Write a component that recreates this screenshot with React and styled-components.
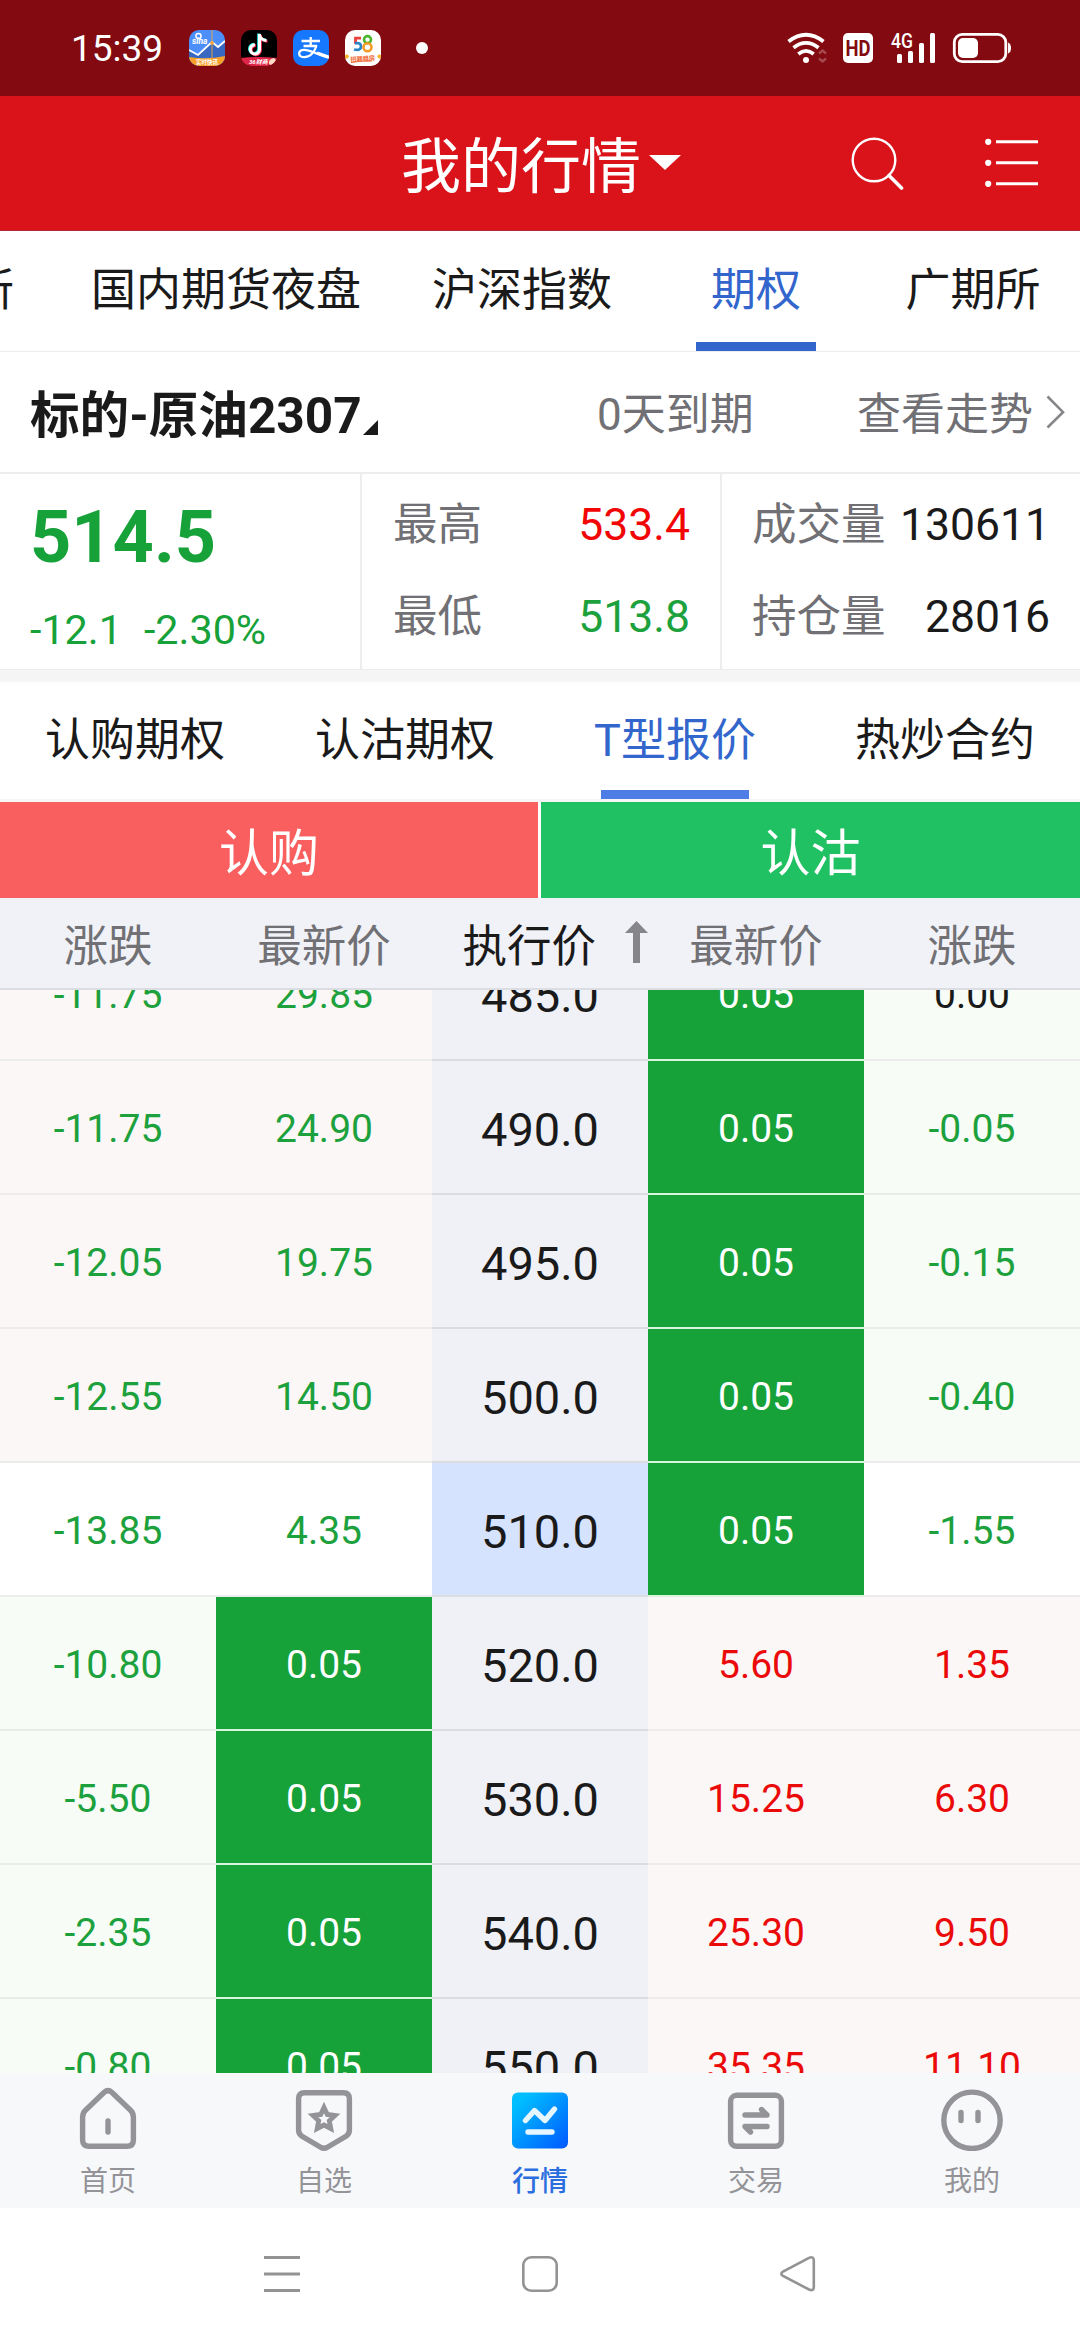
import styled, { createGlobalStyle, css } from 'styled-components';

const tabs = [
  { label: '上期所', width: 60 },
  { label: '国内期货夜盘', width: 332 },
  { label: '沪深指数', width: 260 },
  { label: '期权', width: 208, active: true },
  { label: '广期所', width: 226 },
];

const optionTabs = [
  { label: '认购期权' },
  { label: '认沽期权' },
  { label: 'T型报价', active: true },
  { label: '热炒合约' },
];

const quotes = [
  ['-11.75', '29.85', '485.0', '0.05', '0.00'],
  ['-11.75', '24.90', '490.0', '0.05', '-0.05'],
  ['-12.05', '19.75', '495.0', '0.05', '-0.15'],
  ['-12.55', '14.50', '500.0', '0.05', '-0.40'],
  ['-13.85', '4.35', '510.0', '0.05', '-1.55'],
  ['-10.80', '0.05', '520.0', '5.60', '1.35'],
  ['-5.50', '0.05', '530.0', '15.25', '6.30'],
  ['-2.35', '0.05', '540.0', '25.30', '9.50'],
  ['-0.80', '0.05', '550.0', '35.35', '11.10'],
];

const AT_THE_MONEY = 4;

const navItems = [
  { label: '首页', Icon: HomeIcon },
  { label: '自选', Icon: StarIcon },
  { label: '行情', Icon: MarketIcon, active: true },
  { label: '交易', Icon: TradeIcon },
  { label: '我的', Icon: MineIcon },
];

const App = () => {
  return (
    <>
      <GlobalStyle />
      <Screen>
        <StatusBar>
          <Clock>15:39</Clock>
          <AppIcons>
            <SinaIcon />
            <TiktokIcon />
            <AlipayIcon />
            <WubaIcon />
          </AppIcons>
          <MoreDot />
          <StatusIcons />
        </StatusBar>

        <Header>
          <HeaderTitle>
            <span>我的行情</span>
            <svg width='32' height='15' viewBox='0 0 32 15'>
              <path d='M0 0h32L16 15z' fill='#fff' />
            </svg>
          </HeaderTitle>
          <HeaderActions>
            <svg width='54' height='54' viewBox='0 0 54 54' fill='none' stroke='#fff'>
              <circle cx='23' cy='24' r='21.3' strokeWidth='2.4' />
              <path d='M38 39.5L50.5 52' strokeWidth='3.6' strokeLinecap='round' />
            </svg>
            <svg width='54' height='50' viewBox='0 0 54 50' fill='#fff'>
              <circle cx='3.2' cy='3.8' r='3.1' />
              <circle cx='3.2' cy='24.8' r='3.1' />
              <circle cx='3.2' cy='45.8' r='3.1' />
              <path d='M11 2.3h42v3H11zM11 23.3h42v3H11zM11 44.3h42v3H11z' />
            </svg>
          </HeaderActions>
        </Header>

        <TabBar>
          {tabs.map((tab) => (
            <Tab key={tab.label} $width={tab.width} $active={tab.active}>
              {tab.label}
            </Tab>
          ))}
        </TabBar>

        <ContractBar>
          <ContractName>
            标的-原油2307
            <svg width='15' height='15' viewBox='0 0 15 15'>
              <path d='M15 0v15H0z' fill='#1a1a1a' />
            </svg>
          </ContractName>
          <Expiry>0天到期</Expiry>
          <TrendLink>
            查看走势
            <svg width='19' height='34' viewBox='0 0 19 34' fill='none'>
              <path d='M1.5 1.5L17 17.2L1.5 32.5' stroke='#85858a' strokeWidth='2.6' />
            </svg>
          </TrendLink>
        </ContractBar>

        <Summary>
          <PriceBlock>
            <LastPrice>514.5</LastPrice>
            <Change>
              <span>-12.1</span>
              <span>-2.30%</span>
            </Change>
          </PriceBlock>
          <StatBlock>
            <Stat>
              <StatLabel>最高</StatLabel>
              <StatValue $color='#f10505'>533.4</StatValue>
            </Stat>
            <Stat>
              <StatLabel>最低</StatLabel>
              <StatValue $color='#1ca13d'>513.8</StatValue>
            </Stat>
          </StatBlock>
          <StatBlock>
            <Stat>
              <StatLabel>成交量</StatLabel>
              <StatValue>130611</StatValue>
            </Stat>
            <Stat>
              <StatLabel>持仓量</StatLabel>
              <StatValue>28016</StatValue>
            </Stat>
          </StatBlock>
        </Summary>
        <Divider />

        <OptionTabs>
          {optionTabs.map((tab) => (
            <OptionTab key={tab.label} $active={tab.active}>
              {tab.label}
            </OptionTab>
          ))}
        </OptionTabs>

        <Sides>
          <Side $color='#f95f5f'>认购</Side>
          <Side $color='#1fc162'>认沽</Side>
        </Sides>

        <TableHead>
          <HeadCell>涨跌</HeadCell>
          <HeadCell>最新价</HeadCell>
          <StrikeHead>
            执行价
            <svg width='23' height='42' viewBox='0 0 23 42'>
              <path d='M11.5 0L23 12H15v30H8V12H0z' fill='#85858a' />
            </svg>
          </StrikeHead>
          <HeadCell>最新价</HeadCell>
          <HeadCell>涨跌</HeadCell>
        </TableHead>

        <TableBody>
          <Rows>
            {quotes.map((quote, i) => (
              <QuoteRow key={quote[2]} quote={quote} offset={i - AT_THE_MONEY} />
            ))}
          </Rows>
        </TableBody>

        <BottomNav>
          {navItems.map(({ label, Icon, active }) => (
            <NavItem key={label} $active={active}>
              <Icon />
              {label}
            </NavItem>
          ))}
        </BottomNav>

        <SystemNav>
          <svg width='36' height='36' viewBox='0 0 36 36'>
            <path d='M0 0h36v3H0zM0 16.5h36v3H0zM0 33h36v3H0z' fill='#939393' />
          </svg>
          <svg width='36' height='36' viewBox='0 0 36 36' fill='none'>
            <rect x='1.3' y='1.3' width='33.4' height='33.4' rx='8' stroke='#939393' strokeWidth='2.6' />
          </svg>
          <svg width='36' height='36' viewBox='0 0 36 36' fill='none'>
            <path
              d='M29 1.9L3 15.6Q-0.4 17.6 3 19.8L29 33.5Q33.8 35.5 33.8 31V4.5Q33.8 0 29 1.9Z'
              stroke='#939393'
              strokeWidth='2.6'
            />
          </svg>
        </SystemNav>
      </Screen>
    </>
  );
};

export default App;

const textColor = (value) => {
  if (value.startsWith('-')) return '#1ca13d';
  return Number(value) === 0 ? '#1a1a1a' : '#eb0a0a';
};

const QuoteRow = ({ quote, offset }) => {
  const [callChange, callPrice, strike, putPrice, putChange] = quote;
  const leftBg = offset === 0 ? '#fff' : offset < 0 ? '#fbf7f6' : '#f7fcf6';
  const rightBg = offset === 0 ? '#fff' : offset < 0 ? '#f7fcf6' : '#fbf7f6';

  return (
    <Row>
      <Cell $bg={leftBg} $color={textColor(callChange)}>
        {callChange}
      </Cell>
      {offset > 0 ? (
        <FlashCell>{callPrice}</FlashCell>
      ) : (
        <Cell $bg={leftBg} $color='#1ca13d'>
          {callPrice}
        </Cell>
      )}
      <StrikeCell $current={offset === 0}>{strike}</StrikeCell>
      {offset > 0 ? (
        <Cell $bg={rightBg} $color={textColor(putPrice)}>
          {putPrice}
        </Cell>
      ) : (
        <FlashCell>{putPrice}</FlashCell>
      )}
      <Cell $bg={rightBg} $color={textColor(putChange)}>
        {putChange}
      </Cell>
    </Row>
  );
};

function SinaIcon() {
  return (
    <svg width='36' height='36' viewBox='0 0 36 36'>
      <clipPath id='sina'>
        <rect width='36' height='36' rx='10' />
      </clipPath>
      <g clipPath='url(#sina)'>
        <rect width='36' height='36' fill='#4c8ffb' />
        <path d='M0 21l9 4L23 12l6 5 7-6v17H0z' fill='#3767c0' />
        <path d='M0 20l9 5L23 12l6 5 7-6' fill='none' stroke='#fff' strokeWidth='1.8' />
        <path d='M23 0v28' stroke='#dba550' strokeWidth='1' />
        <circle cx='23' cy='13' r='1.8' fill='#f7a233' />
        <path d='M0 27q18 3 36-1v10H0z' fill='#f8a22c' />
        <circle cx='9.5' cy='6' r='2.6' fill='none' stroke='#fff' strokeWidth='1.5' />
        <text x='3' y='14' fontSize='8.5' fontWeight='700' fontStyle='italic' fill='#fff'>
          sina
        </text>
        <text x='7' y='34' fontSize='5.5' fontWeight='700' fill='#fff'>
          实时快讯
        </text>
      </g>
    </svg>
  );
}

function TiktokIcon() {
  const note = 'M18.5 4v15.2a4.6 4.6 0 1 1-4.6-4.4M18.5 5q1 5 7 5.6';
  return (
    <svg width='36' height='36' viewBox='0 0 36 36'>
      <clipPath id='tiktok'>
        <rect width='36' height='36' rx='10' />
      </clipPath>
      <g clipPath='url(#tiktok)' fill='none' strokeWidth='3'>
        <rect width='36' height='36' fill='#000' />
        <path d={note} stroke='#25f4ee' transform='translate(-.8 -.6)' />
        <path d={note} stroke='#fe2c55' transform='translate(.9 .7)' />
        <path d={note} stroke='#fff' />
        <path d='M0 28q18-2 36 0v8H0z' fill='#e02447' />
        <path d='M28 34q-1-5 5-6l2 2q-2 4-5 5z' fill='#ffd9c4' />
        <text x='8' y='34.3' fontSize='6' fontWeight='700' fontStyle='italic' fill='#fff'>
          36财商
        </text>
      </g>
    </svg>
  );
}

function AlipayIcon() {
  return (
    <svg width='36' height='36' viewBox='0 0 36 36' fill='none' stroke='#fff'>
      <clipPath id='alipay'>
        <rect width='36' height='36' rx='10' />
      </clipPath>
      <g clipPath='url(#alipay)'>
        <rect width='36' height='36' fill='#1677ff' stroke='none' />
        <path d='M8.5 11h18.5M17.7 7v9M10.5 16h13.5' strokeWidth='2.3' />
        <path
          d='M23.6 15.5C21.5 22 17 27.2 11.5 27.2C4.5 27.2 4.5 19.8 11 19.8C18 19.8 24 25 37 28'
          strokeWidth='2.3'
        />
        <path d='M24 23l13 4.5' strokeWidth='3' />
      </g>
    </svg>
  );
}

function WubaIcon() {
  return (
    <svg width='36' height='36' viewBox='0 0 36 36' fill='none'>
      <rect width='36' height='36' rx='10' fill='#fff' />
      <path d='M16 8.2H10.5V14' stroke='#e8413c' strokeWidth='2.8' />
      <path d='M10 13.5q6-1.5 6 3t-7 3' stroke='#2a86c8' strokeWidth='2.8' />
      <circle cx='22.5' cy='9.6' r='3.5' stroke='#4cb52f' strokeWidth='2.6' />
      <circle cx='22.5' cy='17.2' r='4' stroke='#f39a27' strokeWidth='2.6' />
      <circle cx='1.8' cy='26.5' r='2' fill='#f5b02c' />
      <circle cx='34.4' cy='26.5' r='1.9' fill='#f5b02c' />
      <text x='5.5' y='31' fontSize='6.2' fontWeight='700' fill='#f0632b' transform='rotate(-4 18 30)'>
        招聘租房
      </text>
      <path d='M6 32.5q10-2 21-1.5' stroke='#f0632b' strokeWidth='1' />
    </svg>
  );
}

function StatusIcons() {
  return (
    <StatusSvg width='226' height='32' viewBox='787 32 226 32'>
      <g fill='none' stroke='#fff' strokeWidth='3.7'>
        <path d='M788.5 41.5Q806 28 823.5 41.5' />
        <path d='M793.5 47.8Q806 38 818.5 47.8' />
        <path d='M798.3 54Q806 47.8 813.7 54' />
      </g>
      <circle cx='806' cy='60' r='3' fill='#fff' />
      <path d='M819 53.5l3.5-3 3.5 3M819 58.5l3.5 3 3.5-3' fill='none' stroke='#a54a4f' strokeWidth='2.4' />
      <rect x='843' y='33' width='30' height='30' rx='5' fill='#fff' />
      <text x='845.5' y='56' fontSize='22' fontWeight='700' fill='#820a10' textLength='25' lengthAdjust='spacingAndGlyphs'>
        HD
      </text>
      <text x='891' y='48' fontSize='20' fontWeight='500' fill='#fff' textLength='22' lengthAdjust='spacingAndGlyphs'>
        4G
      </text>
      <g fill='#fff'>
        <rect x='897' y='54' width='5' height='9' rx='1.5' />
        <rect x='908' y='51' width='5' height='12' rx='1.5' />
        <rect x='919' y='43' width='5' height='20' rx='1.5' />
        <rect x='930' y='33' width='5' height='30' rx='1.5' />
      </g>
      <rect x='954.3' y='34.3' width='51.5' height='27.4' rx='8' fill='none' stroke='#fff' strokeWidth='2.8' />
      <rect x='958' y='38' width='20' height='20' rx='5' fill='#fff' />
      <path d='M1008 42.5q3 1 3 5.5t-3 5.5z' fill='#fff' />
    </StatusSvg>
  );
}

function HomeIcon() {
  return (
    <svg width='64' height='64' viewBox='0 0 64 64' fill='none' stroke='#939398' strokeWidth='5.4' strokeLinecap='round'>
      <path d='M28.2 5.2Q32 2 35.8 5.2L54.5 23.3Q57.4 26 57.4 30V53Q57.4 59.3 51 59.3H13Q6.6 59.3 6.6 53V30Q6.6 26 9.5 23.3Z' />
      <path d='M32 34v11' />
    </svg>
  );
}

function StarIcon() {
  return (
    <svg width='64' height='64' viewBox='0 0 64 64' fill='none' stroke='#939398' strokeWidth='5.4'>
      <path d='M12.6 5.7H51.4Q57.4 5.7 57.4 11.7V43Q57.4 47 54 49.2L35 60.5Q32 62 29 60.5L10 49.2Q6.6 47 6.6 43V11.7Q6.6 5.7 12.6 5.7Z' />
      <path
        d='M32 20.5L35.3 27.5L43 28.5L37.3 33.8L38.8 41.5L32 38L25.2 41.5L26.7 33.8L21 28.5L28.7 27.5Z'
        strokeWidth='4.8'
      />
    </svg>
  );
}

function MarketIcon() {
  return (
    <svg width='64' height='64' viewBox='0 0 64 64' fill='none'>
      <linearGradient id='market' x1='0.15' y1='0.15' x2='1' y2='1'>
        <stop offset='0' stopColor='#00beff' />
        <stop offset='1' stopColor='#0058ff' />
      </linearGradient>
      <rect x='4' y='5.5' width='56' height='56' rx='6' fill='url(#market)' />
      <path
        d='M17.5 33.5L26.5 23.5L37 33.5L46.5 22M20 45h24'
        stroke='#e6f6ff'
        strokeWidth='5.4'
        strokeLinecap='round'
        strokeLinejoin='round'
      />
    </svg>
  );
}

function TradeIcon() {
  return (
    <svg
      width='64'
      height='64'
      viewBox='0 0 64 64'
      fill='none'
      stroke='#939398'
      strokeWidth='5.4'
      strokeLinecap='round'
      strokeLinejoin='round'
    >
      <rect x='6.6' y='8.3' width='50.8' height='51' rx='6' />
      <path d='M21 28H43L37.5 22.5M43 39.5H21L26.5 45' />
    </svg>
  );
}

function MineIcon() {
  return (
    <svg width='64' height='64' viewBox='0 0 64 64' fill='none' stroke='#939398' strokeWidth='5.4' strokeLinecap='round'>
      <circle cx='32' cy='33.3' r='28.2' />
      <path d='M21 25.500v8M38 25.500v8' />
    </svg>
  );
}

const GlobalStyle = createGlobalStyle`
  * {
    box-sizing: border-box;
  }

  body {
    margin: 0;
    background: #fff;
    font-family: Roboto, 'Noto Sans CJK SC', sans-serif;
    color: #1a1a1a;
  }

  svg {
    display: block;
    flex-shrink: 0;
  }
`;

const Screen = styled.div`
  width: 1080px;
  height: 2340px;
  display: flex;
  flex-direction: column;
  overflow: hidden;
  white-space: nowrap;
`;

const StatusBar = styled.div`
  height: 96px;
  padding: 0 67px 0 71px;
  display: flex;
  align-items: center;
  background-color: #820a10;
`;

const Clock = styled.div`
  width: 118px;
  color: #fff;
  font-size: 37px;
`;

const AppIcons = styled.div`
  display: flex;
  gap: 16px;
`;

const MoreDot = styled.div`
  width: 12px;
  height: 12px;
  margin-left: 35px;
  border-radius: 50%;
  background-color: #fff;
`;

const StatusSvg = styled.svg`
  margin-left: auto;
`;

const Header = styled.header`
  height: 135px;
  padding: 0 41px 0 401px;
  display: flex;
  align-items: center;
  justify-content: space-between;
  background-color: #da121a;
  border-bottom: 1px solid #b02a33;
`;

const HeaderTitle = styled.h1`
  margin: 0;
  display: flex;
  align-items: center;
  gap: 8px;
  color: #fff;
  font-size: 60px;
  font-weight: 400;
  line-height: 80px;

  span {
    padding-top: 10px;
  }

  svg {
    margin-bottom: 1px;
  }
`;

const HeaderActions = styled.div`
  display: flex;
  align-items: center;
  gap: 80px;
`;

const TabBar = styled.nav`
  height: 121px;
  display: flex;
  border-bottom: 1px solid #ededed;
`;

const Tab = styled.div`
  width: ${({ $width }) => $width}px;
  flex-shrink: 0;
  display: flex;
  flex-direction: column;
  align-items: center;
  padding-top: 28px;
  font-size: 45px;
  line-height: 64px;

  &:first-child {
    align-items: flex-end;
    padding-right: 46px;
  }

  ${({ $active }) =>
    $active &&
    css`
      color: #3366cc;

      &::after {
        content: '';
        width: 120px;
        height: 9px;
        margin-top: 19px;
        background-color: #3366cc;
      }
    `}
`;

const ContractBar = styled.div`
  height: 122px;
  padding: 0 15px 3px 30px;
  display: flex;
  align-items: center;
  color: #707075;
  font-size: 44px;
  border-bottom: 2px solid #ededed;
`;

const ContractName = styled.h2`
  width: 567px;
  margin: 0;
  display: flex;
  align-items: center;
  gap: 1px;
  color: #1a1a1a;
  font-size: 49.6px;
  font-weight: 700;

  svg {
    margin-top: 34px;
  }
`;

const Expiry = styled.div`
  flex: 1;
`;

const TrendLink = styled.div`
  display: flex;
  align-items: center;
  gap: 13px;

  svg {
    margin-top: 2px;
  }
`;

const Summary = styled.section`
  height: 195px;
  display: grid;
  grid-template-columns: 362px 360px 358px;
`;

const PriceBlock = styled.div`
  padding: 26px 0 0 30px;
  color: #16a139;
  border-right: 2px solid #ededed;
`;

const LastPrice = styled.div`
  font-size: 72px;
  font-weight: 700;
  line-height: 76px;
`;

const Change = styled.div`
  display: flex;
  gap: 22px;
  margin-top: 28px;
  font-size: 41.3px;
  line-height: 52px;
`;

const StatBlock = styled.div`
  padding: 19px 30px 0 31px;
  display: flex;
  flex-direction: column;
  gap: 28px;

  & + & {
    padding-left: 30px;
  }

  &:nth-child(2) {
    border-right: 2px solid #ededed;
  }
`;

const Stat = styled.div`
  display: flex;
  justify-content: space-between;
  font-size: 44.5px;
  line-height: 64px;
`;

const StatLabel = styled.span`
  color: #707075;
`;

const StatValue = styled.span`
  color: ${({ $color }) => $color || '#1a1a1a'};
`;

const Divider = styled.div`
  height: 14px;
  background-color: #f5f5f5;
  border-top: 1px solid #ededed;
  border-bottom: 2px solid #fafafa;
`;

const OptionTabs = styled.nav`
  height: 119px;
  display: grid;
  grid-template-columns: repeat(4, 1fr);
  border-bottom: 3px solid #f6f6f6;
`;

const OptionTab = styled.div`
  display: flex;
  flex-direction: column;
  align-items: center;
  padding-top: 26px;
  font-size: 45px;
  line-height: 64px;

  ${({ $active }) =>
    $active &&
    css`
      color: #3366cc;

      &::after {
        content: '';
        width: 148px;
        height: 9px;
        margin-top: 17px;
        background-color: #4d7de5;
      }
    `}
`;

const Sides = styled.div`
  height: 96px;
  display: grid;
  grid-template-columns: 538px 539px;
  gap: 3px;
`;

const Side = styled.div`
  display: flex;
  align-items: center;
  justify-content: center;
  padding-bottom: 3px;
  color: #fff;
  font-size: 50px;
  background-color: ${({ $color }) => $color};
`;

const TableHead = styled.div`
  height: 92px;
  display: grid;
  grid-template-columns: repeat(5, 216px);
  background-color: #f1f2f7;
  border-bottom: 2px solid #dcdde2;
`;

const HeadCell = styled.div`
  display: flex;
  align-items: center;
  justify-content: center;
  padding-bottom: 2px;
  color: #707075;
  font-size: 44.5px;
`;

const StrikeHead = styled(HeadCell)`
  justify-content: flex-end;
  gap: 29px;
  color: #1a1a1a;
`;

const TableBody = styled.div`
  height: 1083px;
  overflow: hidden;
`;

/* list is scrolled part way through its first row */
const Rows = styled.div`
  margin-top: -63px;
`;

const Row = styled.div`
  height: 134px;
  display: grid;
  grid-template-columns: repeat(5, 216px);
`;

const Cell = styled.div`
  display: flex;
  align-items: center;
  justify-content: center;
  padding-top: 4px;
  font-size: 39px;
  color: ${({ $color }) => $color};
  background-color: ${({ $bg }) => $bg};
  border-bottom: 2px solid #ececec;
`;

const FlashCell = styled(Cell)`
  color: #fff;
  background-color: #16a139;
  border-bottom-color: #d9f5de;
`;

const StrikeCell = styled(Cell)`
  color: #1a1a1a;
  font-size: 47px;
  background-color: ${({ $current }) => ($current ? '#d6e3ff' : '#f0f1f7')};
  border-bottom-color: #dbdde2;
`;

const BottomNav = styled.nav`
  height: 135px;
  display: grid;
  grid-template-columns: repeat(5, 216px);
  background-color: #f7f8fa;
`;

const NavItem = styled.div`
  display: flex;
  flex-direction: column;
  align-items: center;
  gap: 11px;
  padding-top: 14px;
  color: ${({ $active }) => ($active ? '#2b6fdf' : '#939398')};
  font-size: 28px;
  font-weight: ${({ $active }) => ($active ? 500 : 400)};
  line-height: 40px;
`;

const SystemNav = styled.div`
  height: 132px;
  padding: 0 264px;
  display: flex;
  align-items: center;
  justify-content: space-between;
`;
